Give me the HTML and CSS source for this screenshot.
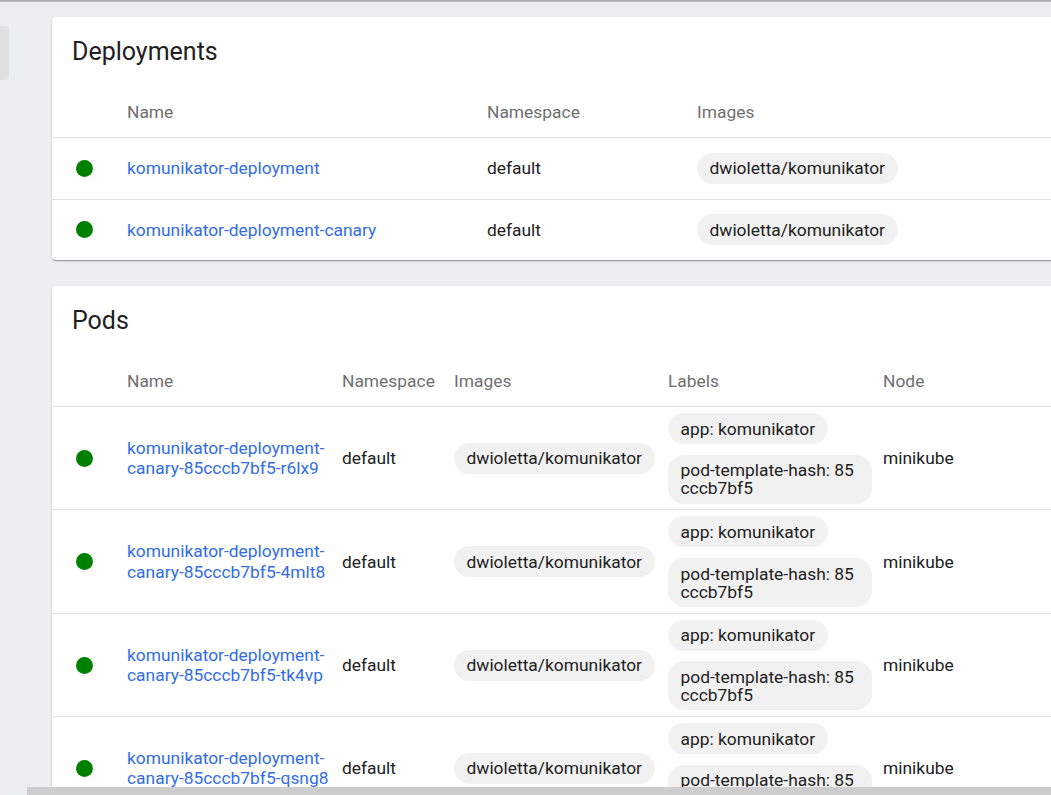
FILE: index.html
```html
<!DOCTYPE html>
<html lang="en">
<head>
<meta charset="utf-8">
<title>Workloads</title>
<link rel="stylesheet" href="styles.css">
</head>
<body>
<div class="topbar"></div>
<div class="layout">
  <aside class="sidebar"><div class="side-item"></div></aside>
  <main class="content">
    <section class="card">
      <h2 class="card-title">Deployments</h2>
      <div class="table deploy">
        <div class="row head">
          <div class="cell"></div>
          <div class="cell">Name</div>
          <div class="cell">Namespace</div>
          <div class="cell">Images</div>
        </div>
        <div class="row">
          <div class="cell status"><span class="dot"></span></div>
          <div class="cell"><a class="link" href="#">komunikator-deployment</a></div>
          <div class="cell">default</div>
          <div class="cell"><span class="chip">dwioletta/komunikator</span></div>
        </div>
        <div class="row">
          <div class="cell status"><span class="dot"></span></div>
          <div class="cell"><a class="link" href="#">komunikator-deployment-canary</a></div>
          <div class="cell">default</div>
          <div class="cell"><span class="chip">dwioletta/komunikator</span></div>
        </div>
      </div>
    </section>

    <section class="card">
      <h2 class="card-title">Pods</h2>
      <div class="table pods">
        <div class="row head">
          <div class="cell"></div>
          <div class="cell">Name</div>
          <div class="cell">Namespace</div>
          <div class="cell">Images</div>
          <div class="cell">Labels</div>
          <div class="cell">Node</div>
        </div>
        <div class="row">
          <div class="cell status"><span class="dot"></span></div>
          <div class="cell name"><a class="link" href="#">komunikator-deployment-canary-85cccb7bf5-r6lx9</a></div>
          <div class="cell">default</div>
          <div class="cell"><span class="chip">dwioletta/komunikator</span></div>
          <div class="cell labels"><span class="chip">app: komunikator</span><span class="chip wrap">pod-template-hash: 85cccb7bf5</span></div>
          <div class="cell">minikube</div>
        </div>
        <div class="row">
          <div class="cell status"><span class="dot"></span></div>
          <div class="cell name"><a class="link" href="#">komunikator-deployment-canary-85cccb7bf5-4mlt8</a></div>
          <div class="cell">default</div>
          <div class="cell"><span class="chip">dwioletta/komunikator</span></div>
          <div class="cell labels"><span class="chip">app: komunikator</span><span class="chip wrap">pod-template-hash: 85cccb7bf5</span></div>
          <div class="cell">minikube</div>
        </div>
        <div class="row">
          <div class="cell status"><span class="dot"></span></div>
          <div class="cell name"><a class="link" href="#">komunikator-deployment-canary-85cccb7bf5-tk4vp</a></div>
          <div class="cell">default</div>
          <div class="cell"><span class="chip">dwioletta/komunikator</span></div>
          <div class="cell labels"><span class="chip">app: komunikator</span><span class="chip wrap">pod-template-hash: 85cccb7bf5</span></div>
          <div class="cell">minikube</div>
        </div>
        <div class="row">
          <div class="cell status"><span class="dot"></span></div>
          <div class="cell name"><a class="link" href="#">komunikator-deployment-canary-85cccb7bf5-qsng8</a></div>
          <div class="cell">default</div>
          <div class="cell"><span class="chip">dwioletta/komunikator</span></div>
          <div class="cell labels"><span class="chip">app: komunikator</span><span class="chip wrap">pod-template-hash: 85cccb7bf5</span></div>
          <div class="cell">minikube</div>
        </div>
      </div>
    </section>
  </main>
</div>
<div class="hscroll"></div>
</body>
</html>
```
FILE: styles.css
```css
html, body {
  margin: 0;
  padding: 0;
  height: 100%;
  overflow: hidden;
}
body {
  background: #edeef0;
  font-family: Roboto, "Liberation Sans", Arial, sans-serif;
  font-size: 17.4px;
  color: #212121;
}
.topbar {
  height: 2px;
  background: linear-gradient(#9c9c9c, #cfcfcf);
}
.layout {
  display: flex;
  align-items: flex-start;
}
.sidebar {
  flex: 0 0 9px;
  padding-top: 24px;
}
.side-item {
  height: 54px;
  background: #e1e1e2;
  border-radius: 0 4px 4px 0;
}
.content {
  flex: 0 0 auto;
  padding: 15px 0 0 43px;
  display: flex;
  flex-direction: column;
  gap: 26px;
}
.card {
  width: 1400px;
  background: #fff;
  border-radius: 4px;
  box-shadow: 0 2px 1px -1px rgba(0,0,0,.2), 0 1px 1px 0 rgba(0,0,0,.14), 0 1px 3px 0 rgba(0,0,0,.12);
}
.card-title {
  margin: 0;
  padding: 19px 20px 15px;
  font-size: 25px;
  line-height: 32px;
  font-weight: 400;
  color: #212121;
}
.row {
  display: grid;
  align-items: center;
  border-top: 1px solid #e1e1e1;
}
.row.head {
  border-top: 0;
  height: 54px;
  padding-top: 3px;
  color: #6f6f6f;
  box-sizing: border-box;
}
.deploy .row {
  grid-template-columns: 75px 360px 210px 400px;
}
.deploy .row:not(.head) {
  height: 61.5px;
  box-sizing: border-box;
}
.pods .card-title {
  padding-top: 20px;
}
.pods .row {
  grid-template-columns: 75px 215px 112px 214px 215px 180px;
}
.pods .row:not(.head) {
  padding: 6px 0 5.7px;
}
.cell {
  min-width: 0;
}
.status {
  padding-left: 24px;
  display: flex;
  align-items: center;
}
.dot {
  width: 17px;
  height: 17px;
  border-radius: 50%;
  background: #008000;
}
.link {
  color: #326de6;
  text-decoration: none;
}
.name {
  padding-right: 3px;
  line-height: 20.5px;
}
.chip {
  display: inline-block;
  background: #f1f1f1;
  border-radius: 16px;
  padding: 6.5px 12.5px;
  line-height: 18px;
  white-space: nowrap;
}
.chip.wrap {
  white-space: normal;
  word-break: break-all;
  max-width: 179px;
}
.labels {
  display: flex;
  flex-direction: column;
  align-items: flex-start;
  gap: 10.7px;
}
.hscroll {
  position: fixed;
  left: 27px;
  right: 0;
  bottom: 0;
  height: 8px;
  background: #cdcdcd;
}
```
